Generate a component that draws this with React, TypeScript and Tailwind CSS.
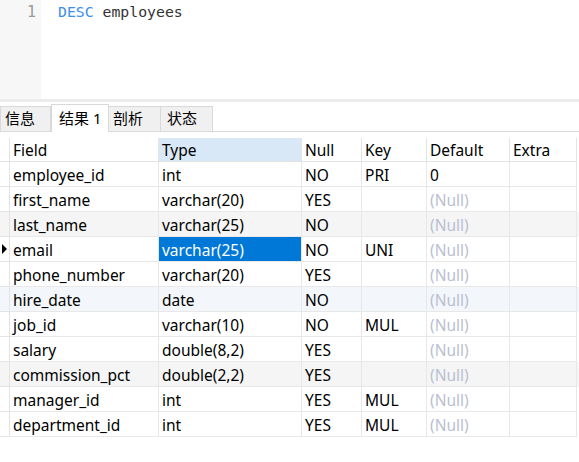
import React from "react";

const cols = [
  { w: "w-[10px]" },
  { w: "w-[149px]" },
  { w: "w-[143px]" },
  { w: "w-[60px]" },
  { w: "w-[65px]" },
  { w: "w-[83px]" },
  { w: "w-[67px]" },
];

const rows: string[][] = [
  ["employee_id", "int", "NO", "PRI", "0"],
  ["first_name", "varchar(20)", "YES", "", "(Null)"],
  ["last_name", "varchar(25)", "NO", "", "(Null)"],
  ["email", "varchar(25)", "NO", "UNI", "(Null)"],
  ["phone_number", "varchar(20)", "YES", "", "(Null)"],
  ["hire_date", "date", "NO", "", "(Null)"],
  ["job_id", "varchar(10)", "NO", "MUL", "(Null)"],
  ["salary", "double(8,2)", "YES", "", "(Null)"],
  ["commission_pct", "double(2,2)", "YES", "", "(Null)"],
  ["manager_id", "int", "YES", "MUL", "(Null)"],
  ["department_id", "int", "YES", "MUL", "(Null)"],
];

const font = { fontFamily: '"Noto Sans", "Noto Sans CJK SC", sans-serif' };

export default function App() {
  return (
    <div className="w-[579px] h-[462px] bg-white overflow-hidden" style={font}>
      {/* editor */}
      <div className="flex h-[99px]">
        <div className="w-[41px] bg-[#f7f7f7] flex justify-end pr-[5px] pt-[2px] text-[15px] text-[#9a9a9a] leading-[20px]" style={{ fontFamily: '"DejaVu Sans Mono", monospace' }}>
          1
        </div>
        <div className="flex-1 pl-[17px] pt-[2px] text-[14.8px] leading-[20px] text-[#333]" style={{ fontFamily: '"DejaVu Sans Mono", monospace' }}>
          <span className="text-[#3b8eea]">DESC</span> employees
        </div>
      </div>
      <div className="h-[3px] bg-[#ececec]" />
      {/* tabs */}
      <div className="flex items-end h-[30px] border-b border-[#d9d9d9]">
        <div className="w-[51px] h-[25px] bg-[#f0f0f0] border border-b-0 border-[#d9d9d9] text-[15px] leading-[23px] pl-[4px] text-black">信息</div>
        <div className="w-[58px] h-[28px] bg-white border border-b-0 border-[#d9d9d9] -mb-px text-[15px] leading-[26px] pl-[7px] text-black">结果 1</div>
        <div className="w-[52px] h-[25px] bg-[#f0f0f0] border border-b-0 border-l-0 border-[#d9d9d9] text-[15px] leading-[23px] pl-[4px] text-black">剖析</div>
        <div className="w-[52px] h-[25px] bg-[#f0f0f0] border border-b-0 border-l-0 border-[#d9d9d9] text-[15px] leading-[23px] pl-[6px] text-black">状态</div>
      </div>
      {/* table */}
      <div className="mt-[6px] text-[15.5px] text-black">
        <div className="flex h-[24px]">
          {["", "Field", "Type", "Null", "Key", "Default", "Extra"].map((h, i) => (
            <div
              key={i}
              className={`${cols[i].w} shrink-0 border-r border-b border-[#e3e3e3] pl-[3px] leading-[24px] ${i === 2 ? "bg-[#d9e8f7]" : "bg-white"}`}
            >
              {h}
            </div>
          ))}
        </div>
        {rows.map((r, ri) => {
          const sel = ri === 3;
          const bg = ri === 2 || ri === 8 ? "bg-[#f5f5f5]" : ri === 5 ? "bg-[#f3f6fb]" : "bg-white";
          return (
            <div key={ri} className={`flex h-[25px] ${bg}`}>
              <div className={`${cols[0].w} shrink-0 border-r border-b border-[#e3e3e3] flex items-center`}>
                {sel && (
                  <svg width="6" height="10" viewBox="0 0 6 10" className="ml-[2px]">
                    <path d="M0 0 L5 5 L0 10 Z" fill="#000" />
                  </svg>
                )}
              </div>
              {[...r, ""].map((c, ci) => {
                const isSelCell = sel && ci === 1;
                const isNull = c === "(Null)";
                return (
                  <div
                    key={ci}
                    className={`${cols[ci + 1].w} shrink-0 border-r border-b border-[#e8e8e8] pl-[3px] pt-[2px] h-[25px] overflow-hidden leading-[22px] whitespace-nowrap ${
                      isSelCell ? "bg-[#0078d7] text-white" : isNull ? "text-[#b9c0d3]" : "text-black"
                    }`}
                  >
                    {c}
                  </div>
                );
              })}
            </div>
          );
        })}
      </div>
    </div>
  );
}
